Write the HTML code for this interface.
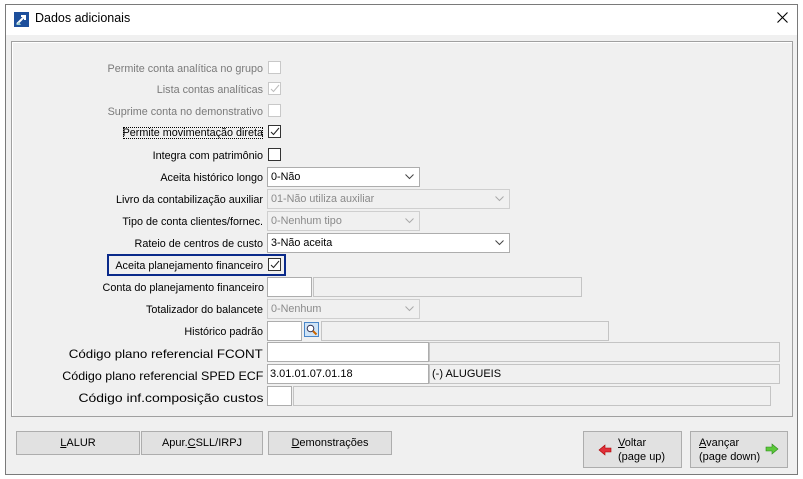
<!DOCTYPE html>
<html><head><meta charset="utf-8"><style>
*{box-sizing:border-box;margin:0;padding:0}
body{width:803px;height:479px;background:#fff;position:relative;overflow:hidden;font-family:"Liberation Sans",sans-serif;font-size:11px;color:#000}
.a{position:absolute}
#win{left:5px;top:4px;width:793px;height:471px;border:1px solid #7a7a7a;background:#f0f0f0}
#title{left:6px;top:5px;width:791px;height:30px;background:#fff}
#panel{left:11px;top:41px;width:782px;height:376px;border:1px solid #a0a0a0;box-shadow:inset 1px 1px 0 #fff}
.l{position:absolute;right:540px;text-align:right;white-space:nowrap;font-size:10.8px;margin-top:2px}
.g{color:#7a7a7a}
.cb{position:absolute;width:13px;height:13px;border:1px solid #333;background:#fff}
.cb.d{border-color:#c8c8c8}
.in{position:absolute;height:20px;border:1px solid #adadad;background:#fff;padding:3px 3px;font-size:11px;white-space:nowrap}
.gr{position:absolute;height:20px;border:1px solid #c4c4c4;background:#f0f0f0}
.cmb{position:absolute;height:20px;border:1px solid #adadad;background:#fff;padding:3px 3px;font-size:10.8px}
.cmb.d{border-color:#cfcfcf;background:#f0f0f0;color:#8a8a8a}
.cmb svg{position:absolute;right:5px;top:6px}
.btn{position:absolute;border:1px solid #adadad;background:#e1e1e1;text-align:center;font-size:11px}
.l.n{font-size:12px;transform-origin:right center;margin-top:2px}
u{text-decoration:underline}
</style></head><body>
<div class="a" id="win"></div>
<div class="a" id="title"></div>
<svg class="a" style="left:14px;top:12px" width="15" height="15" viewBox="0 0 15 15"><rect width="15" height="15" fill="#1d4f9c"/><path d="M3 12 L11 4 M7 4 H11 V8" stroke="#fff" stroke-width="2" fill="none"/><path d="M2 13 L5 10 L7 13Z" fill="#9cc"/></svg>
<div class="a" style="left:35px;top:11px;font-size:12.5px">Dados adicionais</div>
<svg class="a" style="left:777px;top:12px" width="11" height="11"><path d="M0.5 0.5 L10.5 10.5 M10.5 0.5 L0.5 10.5" stroke="#000" stroke-width="1.1"/></svg>
<div class="a" id="panel"></div>

<div class="l g" style="top:61px">Permite conta analítica no grupo</div><div class="cb d" style="left:268px;top:61px"></div>
<div class="l g" style="top:82px">Lista contas analíticas</div><div class="cb d" style="left:268px;top:82px"><svg width="11" height="11"><path d="M2 6 L4.5 8.5 L10 2" stroke="#bbb" fill="none"/></svg></div>
<div class="l g" style="top:104px">Suprime conta no demonstrativo</div><div class="cb d" style="left:268px;top:104px"></div>
<div class="l" style="top:125px;outline:1px dotted #000;outline-offset:-1px">Permite movimentação direta</div><div class="cb" style="left:268px;top:125px"><svg width="11" height="11"><path d="M2 6 L4.5 8.5 L10 2" stroke="#222" fill="none"/></svg></div>
<div class="l" style="top:148px">Integra com patrimônio</div><div class="cb" style="left:268px;top:148px"></div>

<div class="l" style="top:170px">Aceita histórico longo</div>
<div class="cmb" style="left:267px;top:167px;width:153px">0-Não<svg width="9" height="6"><path d="M0.5 0.5 L4.5 4.5 L8.5 0.5" stroke="#444" fill="none"/></svg></div>
<div class="l" style="top:192px">Livro da contabilização auxiliar</div>
<div class="cmb d" style="left:267px;top:189px;width:243px">01-Não utiliza auxiliar<svg width="9" height="6"><path d="M0.5 0.5 L4.5 4.5 L8.5 0.5" stroke="#aaa" fill="none"/></svg></div>
<div class="l" style="top:214px">Tipo de conta clientes/fornec.</div>
<div class="cmb d" style="left:267px;top:211px;width:153px">0-Nenhum tipo<svg width="9" height="6"><path d="M0.5 0.5 L4.5 4.5 L8.5 0.5" stroke="#aaa" fill="none"/></svg></div>
<div class="l" style="top:236px">Rateio de centros de custo</div>
<div class="cmb" style="left:267px;top:233px;width:243px">3-Não aceita<svg width="9" height="6"><path d="M0.5 0.5 L4.5 4.5 L8.5 0.5" stroke="#444" fill="none"/></svg></div>

<div class="a" style="left:107px;top:254px;width:179px;height:22px;border:2px solid #0a2a8a"></div>
<div class="l" style="top:258px">Aceita planejamento financeiro</div><div class="cb" style="left:268px;top:258px"><svg width="11" height="11"><path d="M2 6 L4.5 8.5 L10 2" stroke="#222" fill="none"/></svg></div>

<div class="l" style="top:280px;right:539px">Conta do planejamento financeiro</div>
<div class="in" style="left:267px;top:277px;width:45px"></div><div class="gr" style="left:313px;top:277px;width:269px"></div>
<div class="l" style="top:302px">Totalizador do balancete</div>
<div class="cmb d" style="left:267px;top:299px;width:153px">0-Nenhum<svg width="9" height="6"><path d="M0.5 0.5 L4.5 4.5 L8.5 0.5" stroke="#aaa" fill="none"/></svg></div>
<div class="l" style="top:324px">Histórico padrão</div>
<div class="in" style="left:267px;top:321px;width:35px"></div>
<svg class="a" style="left:304px;top:322px" width="15" height="15"><rect x="0.5" y="0.5" width="14" height="14" fill="#cfe4f7" stroke="#4a86c8"/><circle cx="6.5" cy="6.5" r="3.3" fill="#fff" stroke="#335"/><path d="M9 9 L12.5 12.5" stroke="#c60" stroke-width="2"/></svg>
<div class="gr" style="left:321px;top:321px;width:288px"></div>

<div class="l n" style="top:345px;transform:scaleX(1.11)">Código plano referencial FCONT</div>
<div class="in" style="left:267px;top:342px;width:162px"></div><div class="gr" style="left:429px;top:342px;width:351px"></div>
<div class="l n" style="top:367px;transform:scaleX(1.04)">Código plano referencial SPED ECF</div>
<div class="in" style="left:267px;top:364px;width:162px;padding-left:2px">3.01.01.07.01.18</div>
<div class="gr" style="left:429px;top:364px;width:351px;padding:3px 0 0 2px;font-size:11px">(-) ALUGUEIS</div>
<div class="l n" style="top:389px;transform:scaleX(1.16)">Código inf.composição custos</div>
<div class="in" style="left:267px;top:386px;width:25px"></div><div class="gr" style="left:293px;top:386px;width:478px"></div>

<div class="btn" style="left:16px;top:431px;width:124px;height:24px;line-height:22px"><u>L</u>ALUR</div>
<div class="btn" style="left:141px;top:431px;width:122px;height:24px;line-height:22px">Apur.<u>C</u>SLL/IRPJ</div>
<div class="btn" style="left:268px;top:431px;width:124px;height:24px;line-height:22px"><u>D</u>emonstrações</div>
<div class="btn" style="left:583px;top:431px;width:99px;height:37px;text-align:left">
<svg class="a" style="left:14px;top:12px" width="14" height="12"><path d="M1 6 L7 1 V4 H13 V8 H7 V11Z" fill="#e0303a" stroke="#a00" stroke-width="0.6"/></svg>
<div class="a" style="left:34px;top:4px;line-height:14px"><u>V</u>oltar<br>(page up)</div></div>
<div class="btn" style="left:690px;top:431px;width:98px;height:37px;text-align:left">
<div class="a" style="left:8px;top:4px;line-height:14px"><u>A</u>vançar<br>(page down)</div>
<svg class="a" style="left:74px;top:11px" width="14" height="12"><path d="M13 6 L7 1 V4 H1 V8 H7 V11Z" fill="#5cc83a" stroke="#2a8a1a" stroke-width="0.6"/></svg></div>
</body></html>
